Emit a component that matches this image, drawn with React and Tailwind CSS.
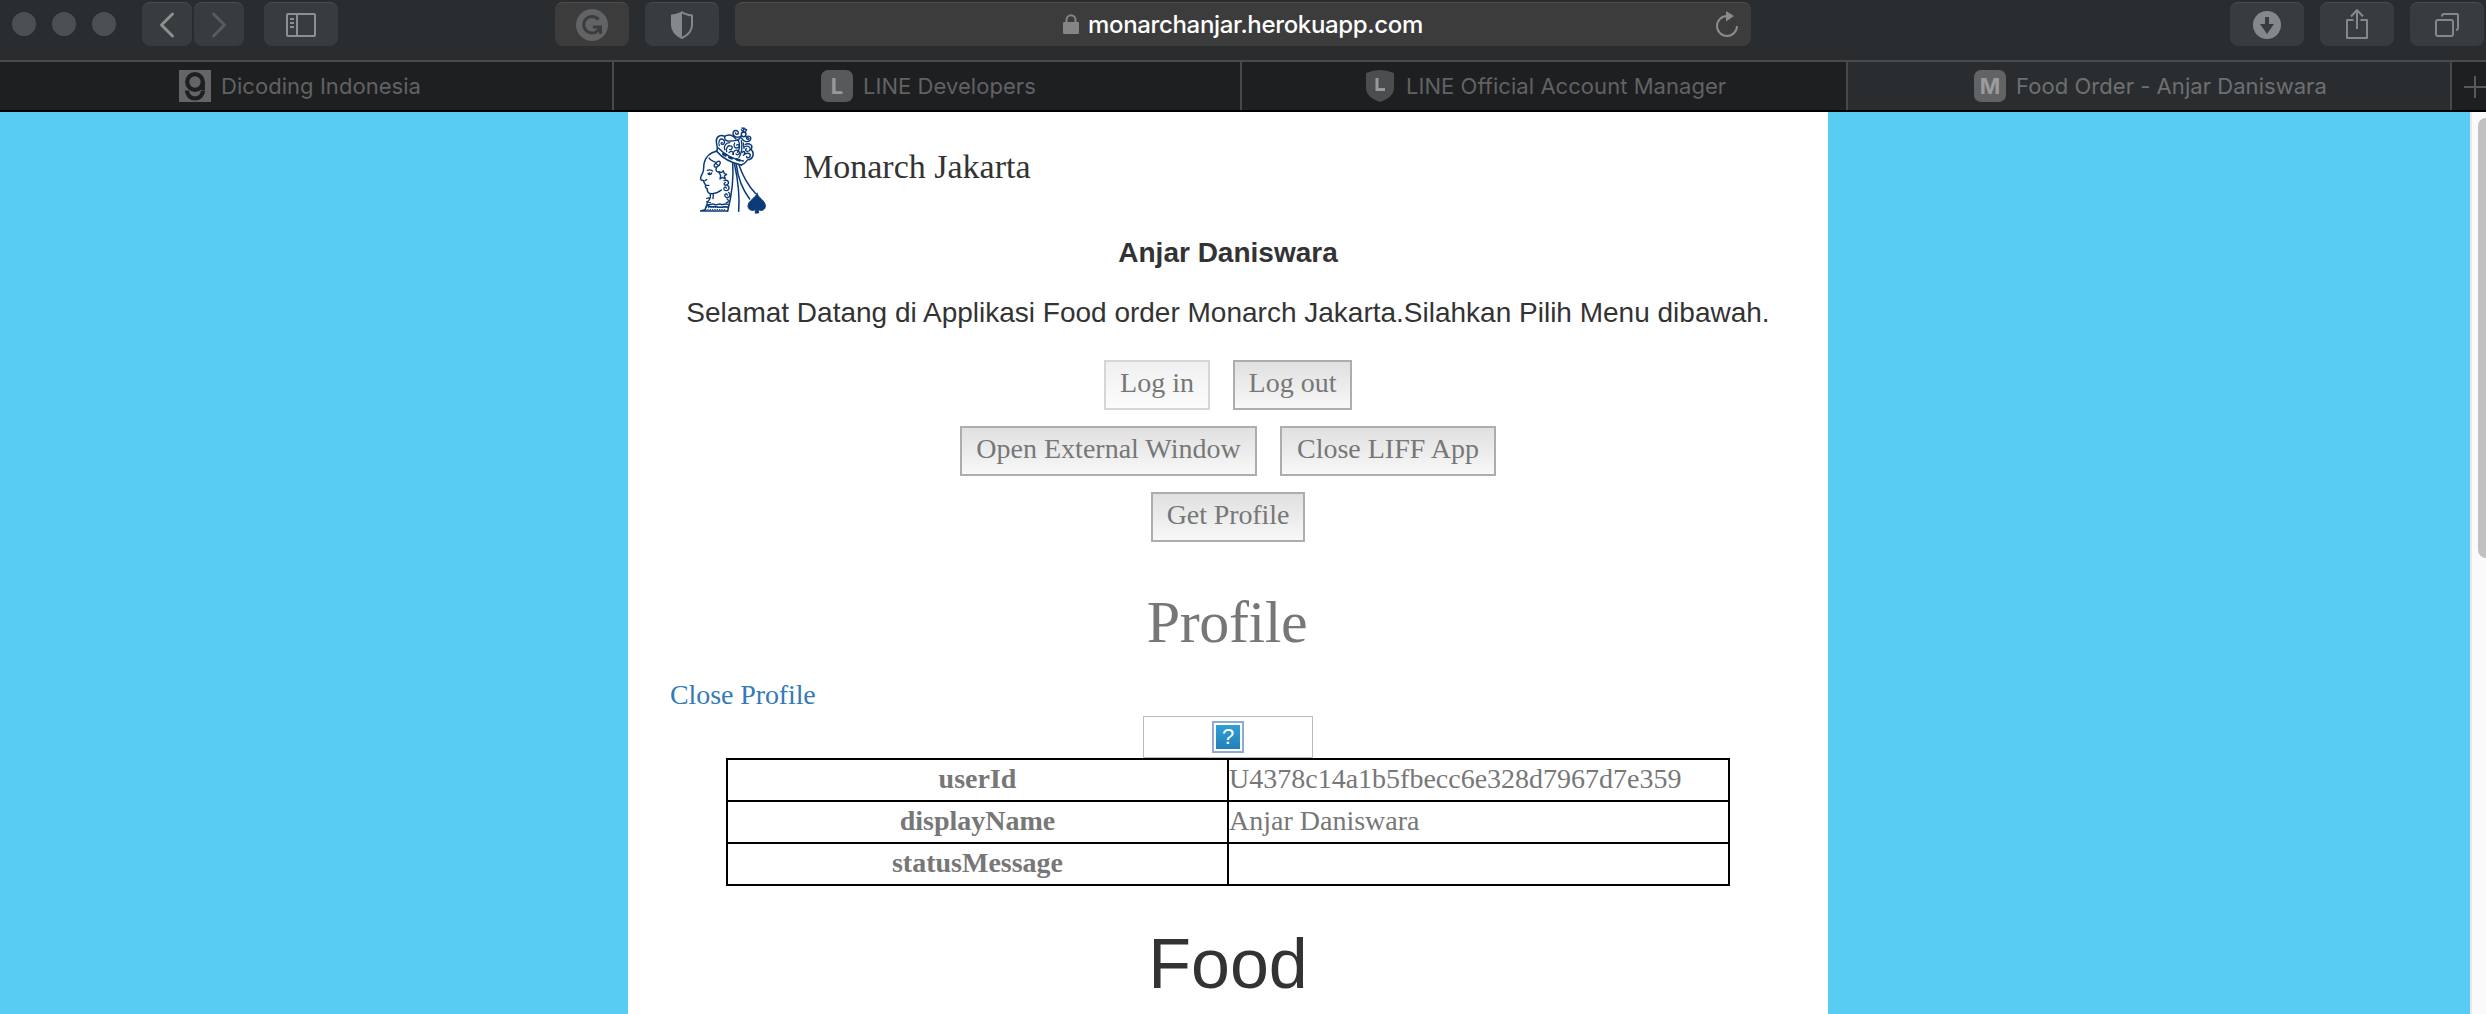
const TIMES = "font-['Liberation_Serif',serif]";

function Dot() {
  return <span className="h-6 w-6 rounded-full bg-[#4c5052]" />;
}

function ToolButton({ className, children }) {
  return (
    <div className={`flex h-11 shrink-0 items-center justify-center rounded-[8px] border-t border-[#4a4d4f] ${className}`}>
      {children}
    </div>
  );
}

function Toolbar() {
  return (
    <div className="flex h-[62px] items-start border-b-2 border-[#484a4c] bg-[#2a2d2f] pt-0.5">
      <div className="flex h-11 items-center gap-4 pl-3">
        <Dot />
        <Dot />
        <Dot />
      </div>
      <ToolButton className="ml-[26px] w-[50px] bg-[#393c3e]">
        <svg width="50" height="44" fill="none" stroke="#8d9092" strokeWidth="3" strokeLinecap="round" strokeLinejoin="round">
          <path d="M30.500 11L19.500 22L30.500 33" />
        </svg>
      </ToolButton>
      <ToolButton className="ml-0.5 w-[50px] bg-[#393c3e]">
        <svg width="50" height="44" fill="none" stroke="#595c5e" strokeWidth="3" strokeLinecap="round" strokeLinejoin="round">
          <path d="M19.500 11L30.500 22L19.500 33" />
        </svg>
      </ToolButton>
      <ToolButton className="ml-5 w-[74px] bg-[#393c3e]">
        <svg width="30" height="24" fill="none" stroke="#8d9092" strokeWidth="2">
          <rect x="1" y="1" width="28" height="22" rx="1" />
          <path d="M11 1V23M4 6H8M4 10H8M4 14H8" />
        </svg>
      </ToolButton>
      <ToolButton className="ml-[217px] w-[74px] bg-[#3c3c3d]">
        <span className="flex h-8 w-8 items-center justify-center rounded-full bg-[#626365]">
          <svg width="24" height="24" fill="none" stroke="#3c3c3d" strokeWidth="3">
            <path d="M18.500 6.500A8.300 8.300 0 1 0 20 14H13M20.500 13V21" />
          </svg>
        </span>
      </ToolButton>
      <ToolButton className="ml-4 w-[74px] bg-[#393c3e]">
        <svg width="24" height="28" viewBox="0 0 24 28">
          <path d="M12 1.200C9 3.400 5.500 4 2 4.500V14C2 20 6 24 12 27C18 24 22 20 22 14V4.500C18.500 4 15 3.400 12 1.200Z" fill="none" stroke="#85888a" strokeWidth="2" />
          <path d="M12 1.200C9 3.400 5.500 4 2 4.500V14C2 20 6 24 12 27Z" fill="#85888a" />
        </svg>
      </ToolButton>
      <div className="ml-4 flex h-11 w-[1016px] shrink-0 items-center rounded-[8px] border-t border-[#505152] bg-[#3c3c3d] pl-[328px]">
        <svg width="16" height="20" className="mb-0.5">
          <path d="M3.500 9V6A4.500 4.800 0 0 1 12.500 6V9" fill="none" stroke="#848586" strokeWidth="2" />
          <rect y="8" width="16" height="12" rx="1" fill="#848586" />
        </svg>
        <span className="mt-px ml-[9px] w-[337px] whitespace-nowrap font-[Inter,sans-serif] text-[24px] leading-8 font-medium tracking-[-0.34px] text-white">
          monarchanjar.herokuapp.com
        </span>
        <svg width="24" height="28" className="ml-[290px]">
          <path d="M12 5A10 10 0 1 0 22 15" fill="none" stroke="#8a8b8c" strokeWidth="2" />
          <path d="M11 0L19 5L11 10.500Z" fill="#8a8b8c" />
        </svg>
      </div>
      <ToolButton className="ml-[479px] w-[74px] bg-[#393c3e]">
        <svg width="28" height="28">
          <circle cx="14" cy="14" r="14" fill="#85888a" />
          <path d="M12 6H16V13H21L14 23L7 13H12Z" fill="#393c3e" />
        </svg>
      </ToolButton>
      <ToolButton className="ml-4 w-[74px] bg-[#393c3e]">
        <svg width="24" height="32" fill="none" stroke="#85888a" strokeWidth="2" className="mb-0.5" strokeLinejoin="round">
          <path d="M8.500 12H2V30H22V12H15.500M12 21V2M6 8.500L12 2L18 8.500" />
        </svg>
      </ToolButton>
      <ToolButton className="ml-4 w-[74px] bg-[#393c3e]">
        <svg width="26" height="26" fill="none" stroke="#85888a" strokeWidth="2">
          <rect x="2" y="8" width="17" height="16" rx="2" />
          <path d="M8 4.500V4A2 2 0 0 1 10 2H23A1 1 0 0 1 24 3V16A2 2 0 0 1 22 18" />
        </svg>
      </ToolButton>
    </div>
  );
}

function TabText({ className, children }) {
  return (
    <span className={`whitespace-nowrap font-[Inter,sans-serif] text-[22px] leading-[30px] tracking-[0.05px] ${className}`}>
      {children}
    </span>
  );
}

function Tabs() {
  return (
    <div className="flex h-[50px] border-b-2 border-black bg-[#1e1f21] text-[#616264]">
      <div className="flex w-[614px] shrink-0 items-center border-r-2 border-[#48494b] pl-[179px]">
        <svg width="32" height="32">
          <rect width="32" height="32" fill="#646567" />
          <ellipse cx="16" cy="12" rx="7.800" ry="7.800" fill="none" stroke="#1e1f21" strokeWidth="4.200" />
          <path d="M23.800 12V20M24 20.500A8 8 0 0 1 8 20.500" fill="none" stroke="#1e1f21" strokeWidth="4.200" />
        </svg>
        <TabText className="ml-2.5">Dicoding Indonesia</TabText>
      </div>
      <div className="flex w-[628px] shrink-0 items-center border-r-2 border-[#48494b] pl-[207px]">
        <span className="flex h-8 w-8 items-center justify-center rounded-[7px] bg-[#58595b] font-[Inter,sans-serif] text-[22px] font-bold text-[#97989a]">L</span>
        <TabText className="ml-2.5">LINE Developers</TabText>
      </div>
      <div className="flex w-[606px] shrink-0 items-center border-r-2 border-[#48494b] pl-[124px]">
        <svg width="28" height="32">
          <path d="M0 3Q14 -3 28 3V18Q28 27 14 32Q0 27 0 18Z" fill="#4c4d4f" />
          <path d="M11 8V19.500H19" fill="none" stroke="#97989a" strokeWidth="3" />
        </svg>
        <TabText className="ml-3">LINE Official Account Manager</TabText>
      </div>
      <div className="flex w-[604px] shrink-0 items-center border-r-2 border-[#48494b] bg-[#2a2d2f] pl-[126px] text-[#6d7072]">
        <span className="flex h-8 w-8 items-center justify-center rounded-[7px] bg-[#626365] font-[Inter,sans-serif] text-[22px] font-bold text-[#9a9b9d]">M</span>
        <TabText className="ml-2.5">Food Order - Anjar Daniswara</TabText>
      </div>
      <div className="flex flex-1 items-center overflow-hidden pl-3">
        <svg width="22" height="22" className="mt-0.5 shrink-0" stroke="#58595b" strokeWidth="2">
          <path d="M0 11H22M11 0V22" />
        </svg>
      </div>
    </div>
  );
}

function QueenLogo() {
  return (
    <svg width="110" height="110" viewBox="0 0 330 330" fill="none" stroke="#0b3a78" strokeWidth="4.500" strokeLinecap="round" strokeLinejoin="round">
      {/* crown */}
      <path d="M111 108C114 98 110 90 109 80C108 64 122 58 134 64C146 56 160 60 168 72" />
      <path d="M109 108C128 130 155 144 184 150" strokeWidth="5" />
      <path d="M115 99C135 120 160 133 190 138" />
      <path d="M184 150C200 146 199 132 208 134C223 128 222 108 212 104C222 92 208 82 196 88" />
      <path d="M118 92C113 78 121 68 130 74C138 80 131 92 124 87C122 84 125 82 127 83M134 64C132 76 142 80 154 78C166 76 170 78 176 74" strokeWidth="4" />
      <path d="M134 104C130 92 137 84 149 83M140 110C136 98 145 90 153 93C160 96 155 107 149 103M164 84C159 93 164 102 174 98C182 92 174 86 170 90M160 119C158 108 168 102 176 108C182 116 174 122 168 117M147 113C154 106 162 110 158 118M184 77C188 98 184 116 177 127M174 73C181 90 179 104 172 112" strokeWidth="4" />
      <path d="M193 96C206 89 216 100 207 108C198 112 193 104 200 101M190 121C198 111 211 114 211 122C208 131 198 130 200 124M187 112C193 106 196 112 193 116M190 84L192 100" strokeWidth="4" />
      <path d="M130 117L137 121M148 127L155 130M170 133L178 136" strokeWidth="8" />
      {/* cross and scrolls on the crown */}
      <circle cx="191" cy="58" r="7" />
      <path d="M189 50L184 44M190 51L192 39M195 52L200 44M186 39L198 43M184 65L177 72M196 64L205 69" strokeWidth="4" />
      <path d="M184 62C175 71 158 66 159 54C161 43 176 45 175 54C173 61 166 58 167 54" strokeWidth="4" />
      <path d="M185 70C190 80 204 84 211 75C216 65 205 60 200 67C198 73 205 76 207 70" strokeWidth="4" />
      {/* face */}
      <path d="M109 109C91 113 78 125 73 142C69 157 74 163 67 176C62 185 59 192 64 195L71 197C71 204 76 207 77 211C75 217 78 220 82 221C81 228 84 236 94 236C108 237 119 229 124 225" />
      <path d="M82 166Q89 162 98 168M84 176C89 181 94 178 95 174M75 197L80 194M77 211L87 211" strokeWidth="4" />
      <circle cx="88" cy="175" r="3.500" fill="#0b3a78" stroke="none" />
      <path d="M87 129C91 139 104 138 108 143C98 152 103 160 111 155C122 151 125 137 114 139C105 143 108 149 113 149M111 156C105 164 109 173 116 170" strokeWidth="4" />
      <path d="M116 170L125 173L130 167L133 176L140 178L133 183L136 192L127 187L120 192L122 182Z" strokeWidth="4" />
      <path d="M132 197C143 193 150 202 142 209C134 214 128 205 136 203M141 210C153 217 145 232 133 225C128 217 138 213 139 219M146 232C155 242 146 251 137 246C129 238 141 233 142 240M141 252C148 255 146 263 139 263" strokeWidth="4" />
      {/* neck and collar */}
      <path d="M91 237V248L80 250M91 247C88 258 84 256 81 264M100 238L99 251M80 260L91 263" strokeWidth="4" />
      <path d="M81 267C87 273 94 264 103 268C111 273 116 264 123 268C130 271 135 264 144 268M82 272C93 279 105 273 114 276C126 279 132 272 143 276" />
      <path d="M78 277H142M76 284H139" strokeWidth="3" strokeDasharray="2 5" />
      <path d="M80 270L75 284L62 288H143" />
      {/* veil */}
      <path d="M158 143C161 185 158 231 143 288" />
      <path d="M163 146C174 195 180 240 176 289M169 149C174 190 187 223 209 252M177 150C189 185 204 211 226 235" />
      {/* spade */}
      <path d="M231 235C235 250 256 256 256 273C256 286 242 290 234 283L236 294H225L228 283C218 290 204 285 204 273C204 257 227 250 231 235Z" fill="#0b3a78" strokeWidth="3" />
    </svg>
  );
}

function LiffButton({ children, disabled, className }) {
  return (
    <button
      disabled={disabled}
      className={`h-[50px] border-2 pb-1 text-center whitespace-nowrap ${TIMES} text-[28px] leading-10 text-[#777] ${className} ${
        disabled ? "border-[#d6d6d6] bg-linear-to-b from-[#f0f0f0] to-[#fcfcfc]" : "border-[#adadad] bg-linear-to-b from-[#e0e0e0] to-[#f8f8f8]"
      }`}
    >
      {children}
    </button>
  );
}

function Row({ label, value }) {
  return (
    <tr className="h-[42px]">
      <th className="w-1/2 border-2 border-black p-0 pb-0.5 leading-[38px] font-bold">{label}</th>
      <td className="w-1/2 border-2 border-black p-0 pb-0.5 leading-[38px]">{value}</td>
    </tr>
  );
}

function Page() {
  return (
    <main className="ml-[628px] h-full w-[1200px] shrink-0 bg-white font-['Liberation_Sans',sans-serif] text-[28px] leading-10 text-[#333]">
      <header className="flex h-[110px] items-start pl-[52px] pt-[3px]">
        <QueenLogo />
        <span className={`mt-[30px] ml-[13px] ${TIMES} text-[34px] leading-[44px]`}>Monarch Jakarta</span>
      </header>
      <p className="mt-[11px] text-center font-bold">Anjar Daniswara</p>
      <p className="mt-5 text-center whitespace-nowrap">
        Selamat Datang di Applikasi Food order Monarch Jakarta.Silahkan Pilih Menu dibawah.
      </p>
      <div className="mt-[27px] flex flex-col items-center gap-4">
        <div className="flex gap-[23px]">
          <LiffButton disabled className="w-[106px]">Log in</LiffButton>
          <LiffButton className="w-[119px]">Log out</LiffButton>
        </div>
        <div className="flex gap-[23px]">
          <LiffButton className="w-[297px]">Open External Window</LiffButton>
          <LiffButton className="w-[216px]">Close LIFF App</LiffButton>
        </div>
        <LiffButton className="w-[154px] tracking-[-0.1px]">Get Profile</LiffButton>
      </div>
      <section className={`${TIMES} text-[#777]`}>
        <h1 className="mt-[47px] pr-0.5 text-center text-[60px] leading-[66px] tracking-[-0.4px]">Profile</h1>
        <a className="mt-5 ml-[42px] block tracking-[-0.1px] text-[#337ab7]">Close Profile</a>
        <div className="mx-auto mt-[1px] flex h-[42px] w-[170px] items-center justify-center border border-[#bcbcbc]">
          <span className="flex h-8 w-8 items-center justify-center border-2 border-[#8cacd6] bg-white">
            <span className="flex h-6 w-6 items-center justify-center bg-linear-to-b from-[#2e9fd3] to-[#2480bb] font-['Liberation_Sans',sans-serif] text-[22px] leading-6 text-white">
              ?
            </span>
          </span>
        </div>
        <table className="mx-auto w-[1004px] table-fixed border-collapse">
          <tbody>
            <Row label="userId" value="U4378c14a1b5fbecc6e328d7967d7e359" />
            <Row label="displayName" value="Anjar Daniswara" />
            <Row label="statusMessage" value="" />
          </tbody>
        </table>
      </section>
      <h2 className="mt-[38px] text-center text-[70px] leading-[80px]">Food</h2>
    </main>
  );
}

export default function App() {
  return (
    <div className="flex h-[1014px] w-[2486px] flex-col overflow-hidden">
      <Toolbar />
      <Tabs />
      <div className="flex min-h-0 flex-1 justify-between bg-[#58ccf2]">
        <Page />
        <div className="w-4 border-l-2 border-[#e8e8e8] bg-[#fafafa] pt-1.5 pl-1.5">
          <div className="h-[440px] rounded-l-[8px] bg-[#c1c1c1]" />
        </div>
      </div>
    </div>
  );
}
